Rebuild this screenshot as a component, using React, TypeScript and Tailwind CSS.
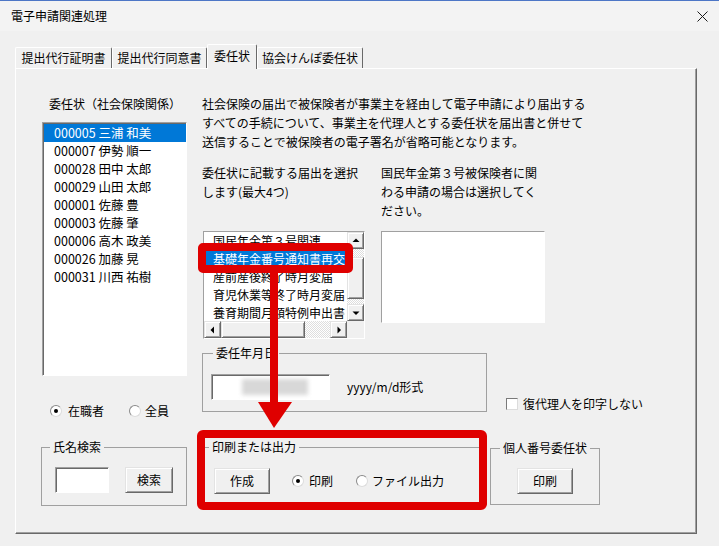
import React from 'react'

const raised =
  'border border-t-[#e3e3e3] border-l-[#e3e3e3] border-r-[#696969] border-b-[#696969] bg-[#f0f0f0] shadow-[inset_1px_1px_0_#ffffff,inset_-1px_-1px_0_#a0a0a0]'
const sunken =
  'border border-t-[#a0a0a0] border-l-[#a0a0a0] border-r-[#ffffff] border-b-[#ffffff] bg-white shadow-[inset_1px_1px_0_#696969]'
const track =
  'bg-[conic-gradient(#ffffff_25%,#dedede_0_50%,#ffffff_0_75%,#dedede_0)] bg-[length:2px_2px]'

const staff = [
  '000005 三浦 和美',
  '000007 伊勢 順一',
  '000028 田中 太郎',
  '000029 山田 太郎',
  '000001 佐藤 豊',
  '000003 佐藤 肇',
  '000006 高木 政美',
  '000026 加藤 晃',
  '000031 川西 祐樹',
]

// the listbox is scrolled/clipped, so only what shows is kept
const forms = [
  '国民年金第３号関連',
  '基礎年金番号通知書再交',
  '産前産後終了時月変届',
  '育児休業等終了時月変届',
  '養育期間月額特例申出書',
]

const tabs = [
  { label: '提出代行証明書', w: 'w-[97px]' },
  { label: '提出代行同意書', w: 'w-[95px]' },
  { label: '委任状', w: 'w-[50px]', active: true },
  { label: '協会けんぽ委任状', w: 'w-[106px]' },
]

function Radio({ checked }: { checked?: boolean }) {
  return (
    <span className="flex h-[12px] w-[12px] shrink-0 items-center justify-center rounded-full border border-[#8a8a8a] border-r-[#dcdcdc] border-b-[#dcdcdc] bg-white">
      {checked && <span className="h-[4px] w-[4px] rounded-full bg-black" />}
    </span>
  )
}

function Arrow({ dir }: { dir: 'up' | 'down' | 'left' | 'right' }) {
  const pts = {
    up: '0.5,5 7.5,5 4,1.5',
    down: '0.5,2.5 7.5,2.5 4,6',
    left: '5,0.5 5,7.5 1.5,4',
    right: '2.5,0.5 2.5,7.5 6,4',
  }[dir]
  return (
    <div className={`flex h-[17px] w-[17px] shrink-0 items-center justify-center ${raised}`}>
      <svg width="8" height="8" viewBox="0 0 8 8">
        <polygon points={pts} fill="#000" />
      </svg>
    </div>
  )
}

function Button({ label, w }: { label: string; w: string }) {
  return (
    <div className={`flex h-[26px] ${w} items-center justify-center leading-none ${raised}`}>
      {label}
    </div>
  )
}

export default function App() {
  return (
    <div className="relative h-[546px] w-[719px] overflow-hidden bg-[#f0f0f0] font-['Noto_Sans_CJK_JP','Noto_Sans',sans-serif] text-[12px] text-black">
      {/* title bar */}
      <div className="flex h-[31px] items-center justify-between border-t border-[#4d76c6] bg-[#f3f3f3] pl-[11px] pr-[11px]">
        <span className="leading-[16px]">電子申請関連処理</span>
        <svg width="11" height="11" viewBox="0 0 11 11">
          <path d="M0.5 0.5 10.5 10.5 M10.5 0.5 0.5 10.5" stroke="#1a1a1a" strokeWidth="1" />
        </svg>
      </div>

      {/* tabs */}
      <div className="mt-[13px] flex h-[24px] items-end pl-[15px]">
        {tabs.map((t) =>
          t.active ? (
            <div
              key={t.label}
              className={`relative z-10 -mb-px flex h-[25px] ${t.w} items-center justify-center rounded-t-[2px] border border-b-0 border-t-white border-l-white border-r-[#696969] bg-[#f0f0f0] pb-[3px]`}
            >
              {t.label}
            </div>
          ) : (
            <div
              key={t.label}
              className={`flex h-[21px] ${t.w} items-center justify-center rounded-t-[2px] border border-b-0 border-t-white border-l-white border-r-[#696969] bg-[#f0f0f0]`}
            >
              {t.label}
            </div>
          )
        )}
      </div>

      {/* tab panel */}
      <div className="ml-[15px] flex h-[466px] w-[682px] border border-t-white border-l-white border-r-[#696969] border-b-[#696969] shadow-[inset_-1px_-1px_0_#a0a0a0]">
        {/* left column */}
        <div className="ml-[25px] flex w-[146px] flex-col">
          <div className="mt-[27px] pl-[8px] leading-[16px]">委任状（社会保険関係）</div>
          <div className={`ml-px mt-[10px] h-[254px] w-[145px] pt-px ${sunken}`}>
            {staff.map((s, i) => (
              <div
                key={s}
                className={`ml-px h-[18px] pl-[10px] text-[12.5px] leading-[18px] ${i === 0 ? 'bg-[#0078d7] text-white' : ''}`}
              >
                {s}
              </div>
            ))}
          </div>
          <div className="mt-[27px] flex h-[16px] items-center pl-[9px] leading-[16px]">
            <Radio checked />
            <span className="ml-[6px]">在職者</span>
            <span className="ml-[25px]">
              <Radio />
            </span>
            <span className="ml-[4px]">全員</span>
          </div>
          <fieldset className="mt-[20px] w-[146px] border border-[#a0a0a0]">
            <legend className="ml-[8px] px-[3px] leading-[16px]">氏名検索</legend>
            <div className="flex items-start pb-[12px] pl-[13px] pt-[12px]">
              <div className={`h-[26px] w-[54px] ${sunken}`} />
              <div className="ml-[16px]">
                <Button label="検索" w="w-[48px]" />
              </div>
            </div>
          </fieldset>
        </div>

        {/* right column */}
        <div className="ml-[15px] flex flex-col">
          <p className="mt-[25px] w-[400px] leading-[19px]">
            社会保険の届出で被保険者が事業主を経由して電子申請により届出する
            <br />
            すべての手続について、事業主を代理人とする委任状を届出書と併せて
            <br />
            送信することで被保険者の電子署名が省略可能となります。
          </p>

          <div className="mt-[12px] flex items-start">
            <div className="flex w-[163px] flex-col">
              <div className="h-[68px] leading-[19px]">
                委任状に記載する届出を選択
                <br />
                します(最大4つ)
              </div>
              <div
                className={`ml-px grid h-[108px] w-[162px] grid-cols-[143px_17px] grid-rows-[89px_17px] shadow-none ${sunken}`}
              >
                <div className="overflow-hidden">
                  {forms.map((f, i) => (
                    <div
                      key={f}
                      className={`ml-[2px] h-[18px] whitespace-nowrap pl-[7px] leading-[18px] ${i === 1 ? 'bg-[#0078d7] text-white' : ''}`}
                    >
                      {f}
                    </div>
                  ))}
                </div>
                <div className="flex flex-col">
                  <Arrow dir="up" />
                  <div className={`h-[8px] ${track}`} />
                  <div className={`h-[42px] w-[17px] ${raised}`} />
                  <div className={`flex-1 ${track}`} />
                  <Arrow dir="down" />
                </div>
                <div className="flex">
                  <Arrow dir="left" />
                  <div className={`h-[17px] w-[84px] ${raised}`} />
                  <div className={`flex-1 ${track}`} />
                  <Arrow dir="right" />
                </div>
                <div className="bg-[#f0f0f0]" />
              </div>
            </div>
            <div className="ml-[16px] flex w-[200px] flex-col">
              <div className="h-[68px] leading-[19px]">
                国民年金第３号被保険者に関
                <br />
                わる申請の場合は選択してく
                <br />
                ださい。
              </div>
              <div className={`h-[92px] w-[164px] shadow-none ${sunken}`} />
            </div>
          </div>

          <div className="mt-[6px] flex items-start">
            <fieldset className="w-[285px] border border-[#a0a0a0]">
              <legend className="ml-[10px] px-[3px] leading-[16px]">委任年月日</legend>
              <div className="flex items-center pb-[11px] pl-[8px] pt-[13px]">
                <div className={`flex h-[26px] w-[119px] items-center pl-[30px] ${sunken}`}>
                  <div className="h-[16px] w-[66px] bg-[#d8d8d8] blur-[2px]" />
                </div>
                <span className="ml-[17px]">yyyy/m/d形式</span>
              </div>
            </fieldset>
            <div className="ml-[19px] mt-[52px] flex items-center leading-[14px]">
              <span className="h-[12px] w-[12px] border border-t-[#7a7a7a] border-l-[#7a7a7a] border-r-[#dcdcdc] border-b-[#dcdcdc] bg-white" />
              <span className="ml-[5px]">復代理人を印字しない</span>
            </div>
          </div>

          <div className="mt-[27px] flex items-start">
            <fieldset className="w-[285px] border border-[#a0a0a0]">
              <legend className="ml-[6px] px-[3px] leading-[16px]">印刷または出力</legend>
              <div className="flex items-center pb-[10px] pl-[11px] pt-[13px]">
                <Button label="作成" w="w-[56px]" />
                <span className="ml-[22px]">
                  <Radio checked />
                </span>
                <span className="ml-[5px]">印刷</span>
                <span className="ml-[23px]">
                  <Radio />
                </span>
                <span className="ml-[4px]">ファイル出力</span>
              </div>
            </fieldset>
            <fieldset className="ml-[3px] mt-px w-[110px] border border-[#a0a0a0]">
              <legend className="ml-[9px] px-[3px] leading-[16px]">個人番号委任状</legend>
              <div className="flex pb-[10px] pl-[26px] pt-[12px]">
                <Button label="印刷" w="w-[56px]" />
              </div>
            </fieldset>
          </div>
        </div>
      </div>

      {/* red annotations */}
      <div className="absolute left-[198px] top-[243px] h-[30px] w-[155px] rounded-[5px] border-[8px] border-[#df0000]" />
      <svg className="absolute left-[256px] top-[272px]" width="38" height="158" viewBox="0 0 38 158">
        <rect x="14" y="0" width="8" height="132" fill="#df0000" />
        <polygon points="2,130 36,130 18,156" fill="#df0000" />
      </svg>
      <div className="absolute left-[197px] top-[430px] h-[80px] w-[290px] rounded-[6px] border-[8px] border-[#df0000]" />
    </div>
  )
}
